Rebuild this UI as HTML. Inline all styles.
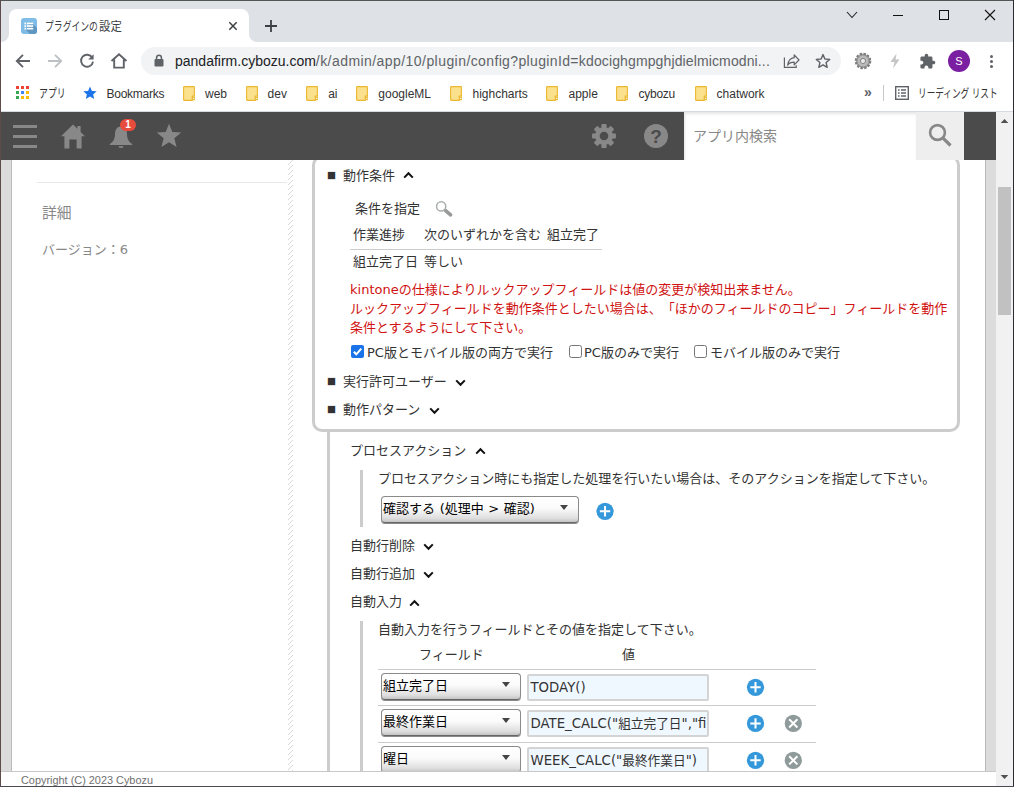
<!DOCTYPE html>
<html lang="ja">
<head>
<meta charset="utf-8">
<title>プラグインの設定</title>
<style>
html,body{margin:0;padding:0;}
body{width:1014px;height:787px;overflow:hidden;position:relative;background:#fff;
  font-family:"Liberation Sans","Noto Sans CJK JP",sans-serif;}
.abs{position:absolute;}
#win{position:absolute;left:0;top:0;width:1014px;height:787px;overflow:hidden;background:#fff;}
/* window frame */
#b-top{left:0;top:0;width:1014px;height:1px;background:#555;z-index:50;}
#b-left{left:0;top:0;width:1px;height:787px;background:#5e4c4c;z-index:50;}
#b-right{left:1013px;top:0;width:1px;height:787px;background:#2a2a30;z-index:50;}
#b-bottom{left:0;top:786px;width:1014px;height:1px;background:#4a4a55;z-index:50;}
/* chrome ui */
#tabstrip{left:1px;top:1px;width:1012px;height:41px;background:#dee1e6;}
#tab{left:9px;top:9px;width:240px;height:33px;background:#fff;border-radius:8px 8px 0 0;}
.foot{position:absolute;bottom:0;width:8px;height:8px;background:#fff;overflow:hidden;}
.foot i{position:absolute;width:16px;height:16px;border-radius:50%;background:#dee1e6;top:-8px;}
.tabtitle{left:45px;top:18px;font-size:12px;line-height:18px;color:#3c4043;white-space:nowrap;
  font-family:"Liberation Sans","Noto Sans CJK JP",sans-serif;transform:scaleX(.81);transform-origin:0 50%;}
#toolbar{left:1px;top:42px;width:1012px;height:38px;background:#fff;}
#omni{left:141px;top:47px;width:700px;height:28px;border-radius:14px;background:#f1f3f4;}
#url{left:175px;top:50px;font-size:14px;line-height:22px;white-space:nowrap;color:#5f6368;
  font-family:"Liberation Sans",sans-serif;letter-spacing:.3px;}
#url b{font-weight:normal;color:#202124;letter-spacing:0;}
#bookbar{left:1px;top:80px;width:1012px;height:31px;background:#fff;}
.bk{position:absolute;top:85px;font-size:12px;line-height:18px;color:#333;white-space:nowrap;
  font-family:"Liberation Sans","Noto Sans CJK JP",sans-serif;}
.fold{position:absolute;top:86px;width:12px;height:15px;}
#bookline{left:1px;top:111px;width:1012px;height:1px;background:#d5dbe0;}
/* page */
#page{left:1px;top:112px;width:995px;height:674px;background:#fff;overflow:hidden;}
#sb{left:996px;top:112px;width:17px;height:674px;background:#f1f1f1;}
#thumb{left:998px;top:187px;width:13px;height:128px;background:#c1c1c1;}
.tri{position:absolute;width:0;height:0;border-left:4px solid transparent;border-right:4px solid transparent;}
#khead{left:0;top:0;width:995px;height:48px;background:#4b4b4b;z-index:10;}
#ksearch{left:683px;top:0;width:232px;height:48px;background:#fff;box-shadow:inset 1px 2px 3px #e6e6e6;}
#ksbtn{left:915px;top:0;width:48px;height:48px;background:#eee;}
#kph{left:692px;top:12px;font-size:14px;line-height:24px;color:#888;white-space:nowrap;}
#lstrip{left:0;top:48px;width:10px;height:611px;background:#dcdcdc;border-right:1px solid #b9b9b9;}
#rstrip{left:984px;top:48px;width:11px;height:611px;background:#dcdcdc;border-left:1px solid #b9b9b9;box-sizing:border-box;}
#footer{left:0;top:659px;width:1012px;height:15px;background:#fff;border-top:1px solid #c8c8c8;z-index:20;}
#copy{left:20px;top:1px;font-size:10.9px;line-height:15px;color:#707070;white-space:nowrap;font-family:"Liberation Sans",sans-serif;}
.t{position:absolute;white-space:nowrap;text-spacing-trim:space-all;font-size:13px;line-height:20px;color:#333;
  font-family:"DejaVu Sans","Liberation Sans","Noto Sans CJK JP",sans-serif;}
.g{color:#888;}
.red{color:#d01212;}
.ln{position:absolute;background:#ccc;}
#panel{left:311px;top:43px;width:648px;height:277px;box-sizing:border-box;border:3px solid #ccc;border-radius:10px;background:#fff;}
.sel{position:absolute;box-sizing:border-box;height:27px;border:1px solid #8a8a8a;border-bottom-color:#666;border-radius:4px;
  background:linear-gradient(#fff 0%,#fbfbfb 45%,#dedede 85%,#c4c4c4 100%);box-shadow:0 1px 0 #8a8a8a;
  font-size:13px;line-height:24px;color:#000;padding-left:1px;white-space:nowrap;overflow:hidden;
  font-family:"DejaVu Sans","Liberation Sans","Noto Sans CJK JP",sans-serif;}
.sel s{position:absolute;right:10px;top:8px;width:0;height:0;border-left:4px solid transparent;border-right:4px solid transparent;border-top:5px solid #444;}
.inp{position:absolute;box-sizing:border-box;height:27px;width:182px;border:2px solid #d4d4d4;border-radius:2px;background:#f0f8ff;
  font-size:12.7px;line-height:23px;color:#333;padding-left:1.5px;white-space:nowrap;overflow:hidden;
  font-family:"DejaVu Sans","Liberation Sans","Noto Sans CJK JP",sans-serif;}
.inp i{font-style:normal;font-size:13.3px;}
</style>
</head>
<body>
<div id="win">
  <div class="abs" id="tabstrip"></div>
  <div class="abs" id="tab">
    <div class="foot" style="left:-8px"><i style="left:-8px"></i></div>
    <div class="foot" style="right:-8px"><i style="left:0"></i></div>
  </div>
  <div class="abs tabtitle" style="transform:scaleX(.735)">プラグインの</div><div class="abs tabtitle" style="left:98.6px;transform:scaleX(.95)">設定</div>
  <div class="abs" id="toolbar"></div>
  <div class="abs" id="omni"></div>
  <div class="abs" id="url"><b>pandafirm.cybozu.com</b><span style="letter-spacing:.44px">/k/admin/app/10/plugin/</span><span style="letter-spacing:.36px">config?pluginId=</span><span style="letter-spacing:.125px">kdocighgmpghjdielmicmodni...</span></div>
  <div class="abs" id="bookbar"></div>
  <div class="abs" id="bookline"></div>


  <!-- tab favicon -->
  <svg class="abs" style="left:21px;top:18px" width="16" height="16" viewBox="0 0 16 16"><rect x="0" y="0" width="16" height="16" rx="3" fill="#7fbde6"/><path d="M10 4 L16 10 V13 a3 3 0 0 1 -3 3 H9 L4 11z" fill="#5f96c2"/><rect x="3.4" y="4.6" width="8.8" height="1.7" fill="#fff"/><rect x="3.4" y="7.2" width="8.8" height="1.7" fill="#fff"/><rect x="3.4" y="9.8" width="8.8" height="1.7" fill="#fff"/><rect x="5.1" y="4.4" width="0.9" height="7.4" fill="#7fbde6"/></svg>
  <!-- tab close -->
  <svg class="abs" style="left:228px;top:21px" width="10" height="10" viewBox="0 0 10 10"><path d="M1.3 1.3 L8.7 8.7 M8.7 1.3 L1.3 8.7" stroke="#3c4043" stroke-width="1.5" fill="none"/></svg>
  <!-- new tab plus -->
  <svg class="abs" style="left:264px;top:19px" width="14" height="14" viewBox="0 0 14 14"><path d="M7 1 V13 M1 7 H13" stroke="#3c4043" stroke-width="1.8" fill="none"/></svg>
  <!-- window controls -->
  <svg class="abs" style="left:846px;top:10px" width="12" height="10" viewBox="0 0 12 10"><path d="M1 2 L6 7.5 L11 2" stroke="#222" stroke-width="1.1" fill="none"/></svg>
  <div class="abs" style="left:893px;top:15px;width:10px;height:1px;background:#111"></div>
  <div class="abs" style="left:939px;top:10px;width:10px;height:10px;box-sizing:border-box;border:1px solid #111"></div>
  <svg class="abs" style="left:984px;top:9px" width="12" height="12" viewBox="0 0 12 12"><path d="M1 1 L11 11 M11 1 L1 11" stroke="#111" stroke-width="1.1" fill="none"/></svg>
  <!-- nav -->
  <svg class="abs" style="left:15px;top:53px" width="16" height="16" viewBox="0 0 16 16"><path d="M15 8 H2.5 M8 1.8 L1.8 8 L8 14.2" stroke="#5f6368" stroke-width="1.9" fill="none"/></svg>
  <svg class="abs" style="left:47px;top:53px" width="16" height="16" viewBox="0 0 16 16"><path d="M1 8 H13.5 M8 1.8 L14.2 8 L8 14.2" stroke="#bdc1c6" stroke-width="1.9" fill="none"/></svg>
  <svg class="abs" style="left:79px;top:53px" width="16" height="16" viewBox="0 0 16 16"><path d="M13.2 4.6 A6 6 0 1 0 14 8.6" stroke="#5f6368" stroke-width="1.9" fill="none"/><path d="M14.6 1.2 V6.6 H9.2z" fill="#5f6368"/></svg>
  <svg class="abs" style="left:110px;top:52px" width="18" height="18" viewBox="0 0 18 18"><path d="M1.5 9 L9 2.2 L16.5 9 M4.2 7.6 V15.6 H13.8 V7.6" stroke="#5f6368" stroke-width="1.9" fill="none" stroke-linejoin="miter"/></svg>
  <!-- lock -->
  <svg class="abs" style="left:154px;top:54px" width="10" height="13" viewBox="0 0 10 13"><rect x="0.5" y="5" width="9" height="7.5" rx="1" fill="#5f6368"/><path d="M2.6 5.5 V3.6 a2.4 2.4 0 0 1 4.8 0 V5.5" stroke="#5f6368" stroke-width="1.5" fill="none"/></svg>
  <!-- share -->
  <svg class="abs" style="left:783px;top:53px" width="18" height="16" viewBox="0 0 18 16"><path d="M1.4 4.6 V14.3 H13.2 V12.3" stroke="#5f6368" stroke-width="1.2" fill="none"/><path d="M11.2 1.9 L16 7 L11.2 11.8 V9.2 C8 9.2 6 10.2 4.7 12.2 C5.2 8 7.6 5.2 11.2 4.7 Z" stroke="#5f6368" stroke-width="1.2" fill="none" stroke-linejoin="round"/></svg>
  <!-- bookmark star -->
  <svg class="abs" style="left:815px;top:53px" width="16" height="16" viewBox="0 0 16 16"><path d="M8 1.6 L9.9 6 L14.7 6.4 L11.1 9.6 L12.2 14.3 L8 11.8 L3.8 14.3 L4.9 9.6 L1.3 6.4 L6.1 6z" stroke="#5f6368" stroke-width="1.4" fill="none" stroke-linejoin="round"/></svg>
  <!-- ext gear -->
  <svg class="abs" style="left:854px;top:52px" width="18" height="18" viewBox="0 0 18 18"><circle cx="9" cy="9" r="7.2" fill="#a8a8a8" stroke="#7d7d7d" stroke-width="2.2" stroke-dasharray="2.4 1.4"/><circle cx="9" cy="9" r="6" fill="#b9b9b9" stroke="#8a8a8a" stroke-width="0.8"/><circle cx="9" cy="9" r="2.6" fill="#e8e8e8" stroke="#7d7d7d" stroke-width="0.9"/></svg>
  <!-- lightning -->
  <svg class="abs" style="left:889px;top:53px" width="12" height="16" viewBox="0 0 12 16"><path d="M7.5 0.5 L1.5 9 H5.5 L4 15.5 L10.5 6.5 H6.5z" fill="#c4c4c4"/></svg>
  <!-- puzzle -->
  <svg class="abs" style="left:918.6px;top:53px" width="17" height="17" viewBox="0 0 24 24"><path d="M20.5 11H19V7c0-1.1-.9-2-2-2h-4V3.5C13 2.12 11.88 1 10.5 1S8 2.12 8 3.5V5H4c-1.1 0-1.99.9-1.99 2v3.8H3.5c1.49 0 2.7 1.21 2.7 2.7s-1.21 2.7-2.7 2.7H2V20c0 1.1.9 2 2 2h3.8v-1.5c0-1.49 1.21-2.7 2.7-2.7 1.49 0 2.7 1.21 2.7 2.7V22H17c1.1 0 2-.9 2-2v-4h1.5c1.38 0 2.5-1.12 2.5-2.5S21.88 11 20.5 11z" fill="#5f6368"/></svg>
  <!-- avatar -->
  <div class="abs" style="left:948px;top:50px;width:22px;height:22px;border-radius:50%;background:#7b1fa2;color:#fff;font:11px/22px 'Liberation Sans',sans-serif;text-align:center">S</div>
  <!-- menu dots -->
  <div class="abs" style="left:990px;top:55px;width:3px;height:3px;border-radius:50%;background:#5f6368;box-shadow:0 5px 0 #5f6368,0 10px 0 #5f6368"></div>
  <!-- bookmarks -->
  <svg class="abs" style="left:16px;top:86px" width="14" height="14" viewBox="0 0 14 14"><rect x="0" y="0" width="3" height="3" fill="#ea4335"/><rect x="5" y="0" width="3" height="3" fill="#ea4335"/><rect x="10" y="0" width="3" height="3" fill="#ea4335"/><rect x="0" y="5" width="3" height="3" fill="#34a853"/><rect x="5" y="5" width="3" height="3" fill="#4285f4"/><rect x="10" y="5" width="3" height="3" fill="#fbbc04"/><rect x="0" y="10" width="3" height="3" fill="#34a853"/><rect x="5" y="10" width="3" height="3" fill="#fbbc04"/><rect x="10" y="10" width="3" height="3" fill="#fbbc04"/></svg>
  <div class="bk" style="left:39px;transform:scaleX(.74);transform-origin:0 50%">アプリ</div>
  <svg class="abs" style="left:83px;top:86px" width="14" height="14" viewBox="0 0 14 14"><path d="M7 0.5 L8.9 4.9 L13.7 5.3 L10.1 8.4 L11.2 13.1 L7 10.6 L2.8 13.1 L3.9 8.4 L0.3 5.3 L5.1 4.9z" fill="#1a73e8"/></svg>
  <div class="bk" style="left:106.5px;letter-spacing:-.25px">Bookmarks</div>
  <svg class="fold" style="left:183px" viewBox="0 0 12 15"><path d="M1.2 0.6 H10.8 a0.6 0.6 0 0 1 0.6 0.6 V10 H9.2 V14.4 H1.2 a0.6 0.6 0 0 1 -0.6 -0.6 V1.2 a0.6 0.6 0 0 1 0.6 -0.6z" fill="#fbe18d" stroke="#ecb730" stroke-width="1.1"/><rect x="9.6" y="10.8" width="1.8" height="3" fill="none" stroke="#ecb730" stroke-width="0.9"/></svg>
  <div class="bk" style="left:205px">web</div>
  <svg class="fold" style="left:245.5px" viewBox="0 0 12 15"><path d="M1.2 0.6 H10.8 a0.6 0.6 0 0 1 0.6 0.6 V10 H9.2 V14.4 H1.2 a0.6 0.6 0 0 1 -0.6 -0.6 V1.2 a0.6 0.6 0 0 1 0.6 -0.6z" fill="#fbe18d" stroke="#ecb730" stroke-width="1.1"/><rect x="9.6" y="10.8" width="1.8" height="3" fill="none" stroke="#ecb730" stroke-width="0.9"/></svg>
  <div class="bk" style="left:267.6px">dev</div>
  <svg class="fold" style="left:306px" viewBox="0 0 12 15"><path d="M1.2 0.6 H10.8 a0.6 0.6 0 0 1 0.6 0.6 V10 H9.2 V14.4 H1.2 a0.6 0.6 0 0 1 -0.6 -0.6 V1.2 a0.6 0.6 0 0 1 0.6 -0.6z" fill="#fbe18d" stroke="#ecb730" stroke-width="1.1"/><rect x="9.6" y="10.8" width="1.8" height="3" fill="none" stroke="#ecb730" stroke-width="0.9"/></svg>
  <div class="bk" style="left:328.2px">ai</div>
  <svg class="fold" style="left:356px" viewBox="0 0 12 15"><path d="M1.2 0.6 H10.8 a0.6 0.6 0 0 1 0.6 0.6 V10 H9.2 V14.4 H1.2 a0.6 0.6 0 0 1 -0.6 -0.6 V1.2 a0.6 0.6 0 0 1 0.6 -0.6z" fill="#fbe18d" stroke="#ecb730" stroke-width="1.1"/><rect x="9.6" y="10.8" width="1.8" height="3" fill="none" stroke="#ecb730" stroke-width="0.9"/></svg>
  <div class="bk" style="left:378.3px">googleML</div>
  <svg class="fold" style="left:450px" viewBox="0 0 12 15"><path d="M1.2 0.6 H10.8 a0.6 0.6 0 0 1 0.6 0.6 V10 H9.2 V14.4 H1.2 a0.6 0.6 0 0 1 -0.6 -0.6 V1.2 a0.6 0.6 0 0 1 0.6 -0.6z" fill="#fbe18d" stroke="#ecb730" stroke-width="1.1"/><rect x="9.6" y="10.8" width="1.8" height="3" fill="none" stroke="#ecb730" stroke-width="0.9"/></svg>
  <div class="bk" style="left:472.5px">highcharts</div>
  <svg class="fold" style="left:546px" viewBox="0 0 12 15"><path d="M1.2 0.6 H10.8 a0.6 0.6 0 0 1 0.6 0.6 V10 H9.2 V14.4 H1.2 a0.6 0.6 0 0 1 -0.6 -0.6 V1.2 a0.6 0.6 0 0 1 0.6 -0.6z" fill="#fbe18d" stroke="#ecb730" stroke-width="1.1"/><rect x="9.6" y="10.8" width="1.8" height="3" fill="none" stroke="#ecb730" stroke-width="0.9"/></svg>
  <div class="bk" style="left:568.5px">apple</div>
  <svg class="fold" style="left:615.7px" viewBox="0 0 12 15"><path d="M1.2 0.6 H10.8 a0.6 0.6 0 0 1 0.6 0.6 V10 H9.2 V14.4 H1.2 a0.6 0.6 0 0 1 -0.6 -0.6 V1.2 a0.6 0.6 0 0 1 0.6 -0.6z" fill="#fbe18d" stroke="#ecb730" stroke-width="1.1"/><rect x="9.6" y="10.8" width="1.8" height="3" fill="none" stroke="#ecb730" stroke-width="0.9"/></svg>
  <div class="bk" style="left:638.5px;letter-spacing:-.25px">cybozu</div>
  <svg class="fold" style="left:694.5px" viewBox="0 0 12 15"><path d="M1.2 0.6 H10.8 a0.6 0.6 0 0 1 0.6 0.6 V10 H9.2 V14.4 H1.2 a0.6 0.6 0 0 1 -0.6 -0.6 V1.2 a0.6 0.6 0 0 1 0.6 -0.6z" fill="#fbe18d" stroke="#ecb730" stroke-width="1.1"/><rect x="9.6" y="10.8" width="1.8" height="3" fill="none" stroke="#ecb730" stroke-width="0.9"/></svg>
  <div class="bk" style="left:716.6px">chatwork</div>
  <div class="bk" style="left:864px;top:83px;font-size:14px;color:#5f6368;font-weight:bold">»</div>
  <div class="abs" style="left:883px;top:85px;width:1px;height:16px;background:#c8c8c8"></div>
  <svg class="abs" style="left:895px;top:86px" width="14" height="14" viewBox="0 0 14 14"><rect x="0.7" y="0.7" width="12.6" height="12.6" fill="none" stroke="#5f6368" stroke-width="1.4"/><path d="M3 4 H4.6 M6 4 H11 M3 7 H4.6 M6 7 H11 M3 10 H4.6 M6 10 H11" stroke="#5f6368" stroke-width="1.4"/></svg>
  <div class="bk" style="left:918px;transform:scaleX(.72);transform-origin:0 50%">リーディング リスト</div>

  <div class="abs" id="page">
    <div class="abs" id="lstrip"></div>
    <div class="abs" id="rstrip"></div>

    <!-- sidebar -->
    <div class="ln" style="left:36px;top:70px;width:250px;height:1px;background:#e8e8e8"></div>
    <div class="t g" style="left:41px;top:89px;font-size:14.8px;line-height:24px">詳細</div>
    <div class="t g" style="left:41px;top:128px">バージョン：6</div>
    <svg class="abs" id="hatch" style="left:287px;top:48px" width="5" height="612"><defs><pattern id="hp" width="5" height="5" patternUnits="userSpaceOnUse"><path d="M4 0h1v1h-1z M3 1h1v1h-1z M2 2h1v1h-1z M1 3h1v1h-1z M0 4h1v1h-1z" fill="#d9d9d9"/></pattern></defs><rect width="5" height="612" fill="url(#hp)"/></svg>
    <!-- below-panel borders -->
    <div class="ln" style="left:326px;top:300px;width:3px;height:360px"></div>
    <div class="ln" style="left:359px;top:358px;width:3px;height:57px"></div>
    <div class="ln" style="left:359px;top:509px;width:3px;height:151px"></div>
    <!-- panel -->
    <div class="abs" id="panel"></div>
    <div class="t" style="left:326px;top:54px"><span style="font-size:9.5px;position:relative;top:-2.5px;margin-right:7px">■</span>動作条件</div>
    <div class="t" style="left:354px;top:87px">条件を指定</div>
    <div class="t" style="left:352px;top:113px">作業進捗</div>
    <div class="t" style="left:423px;top:113px">次のいずれかを含む</div>
    <div class="t" style="left:546px;top:113px">組立完了</div>
    <div class="ln" style="left:349px;top:137px;width:252px;height:1px"></div>
    <div class="t" style="left:352px;top:140px">組立完了日</div>
    <div class="t" style="left:423px;top:140px">等しい</div>
    <div class="t red" style="left:349px;top:168px">kintoneの仕様によりルックアップフィールドは値の変更が検知出来ません。</div>
    <div class="t red" style="left:349px;top:187px">ルックアップフィールドを動作条件としたい場合は、「ほかのフィールドのコピー」フィールドを動作</div>
    <div class="t red" style="left:349px;top:206px">条件とするようにして下さい。</div>
    <div class="t" style="left:366px;top:231px">PC版とモバイル版の両方で実行</div>
    <div class="t" style="left:583px;top:231px">PC版のみで実行</div>
    <div class="t" style="left:709px;top:231px">モバイル版のみで実行</div>
    <div class="t" style="left:326px;top:260px"><span style="font-size:9.5px;position:relative;top:-2.5px;margin-right:7px">■</span>実行許可ユーザー</div>
    <div class="t" style="left:326px;top:288px"><span style="font-size:9.5px;position:relative;top:-2.5px;margin-right:7px">■</span>動作パターン</div>
    <!-- sections -->
    <div class="t" style="left:349px;top:329px">プロセスアクション</div>
    <div class="t" style="left:377px;top:357px">プロセスアクション時にも指定した処理を行いたい場合は、そのアクションを指定して下さい。</div>
    <div class="sel" style="left:380px;top:384px;width:198px;word-spacing:.5px">確認する (処理中 &gt; 確認)<s></s></div>
    <div class="t" style="left:349px;top:424px">自動行削除</div>
    <div class="t" style="left:349px;top:452px">自動行追加</div>
    <div class="t" style="left:349px;top:480px">自動入力</div>
    <div class="t" style="left:377px;top:508px">自動入力を行うフィールドとその値を指定して下さい。</div>
    <div class="t" style="left:418px;top:533px">フィールド</div>
    <div class="t" style="left:621px;top:533px">値</div>
    <div class="ln" style="left:377px;top:557px;width:438px;height:1px"></div>
    <div class="ln" style="left:377px;top:593px;width:438px;height:1px"></div>
    <div class="ln" style="left:377px;top:630px;width:438px;height:1px"></div>
    <div class="sel" style="left:380px;top:561px;width:140px">組立完了日<s></s></div>
    <div class="sel" style="left:380px;top:597px;width:140px">最終作業日<s></s></div>
    <div class="sel" style="left:380px;top:634px;width:140px">曜日<s></s></div>
    <div class="inp" style="left:526px;top:562px"><i>TODAY()</i></div>
    <div class="inp" style="left:526px;top:598px"><i>DATE_CALC("</i>組立完了日<i>","fi</i></div>
    <div class="inp" style="left:526px;top:635px"><i>WEEK_CALC("</i>最終作業日<i>")</i></div>
    <!-- icons -->
    <svg class="abs" style="left:401.5px;top:59px" width="11" height="8" viewBox="0 0 11 8"><path d="M1.2 6.6 L5.5 2.2 L9.8 6.6" stroke="#111" stroke-width="2" fill="none"/></svg>
    <svg class="abs" style="left:453.5px;top:267px" width="11" height="8" viewBox="0 0 11 8"><path d="M1.2 1.4 L5.5 5.8 L9.8 1.4" stroke="#111" stroke-width="2" fill="none"/></svg>
    <svg class="abs" style="left:427.5px;top:295px" width="11" height="8" viewBox="0 0 11 8"><path d="M1.2 1.4 L5.5 5.8 L9.8 1.4" stroke="#111" stroke-width="2" fill="none"/></svg>
    <svg class="abs" style="left:474px;top:335px" width="11" height="8" viewBox="0 0 11 8"><path d="M1.2 6.6 L5.5 2.2 L9.8 6.6" stroke="#111" stroke-width="2" fill="none"/></svg>
    <svg class="abs" style="left:422px;top:431px" width="11" height="8" viewBox="0 0 11 8"><path d="M1.2 1.4 L5.5 5.8 L9.8 1.4" stroke="#111" stroke-width="2" fill="none"/></svg>
    <svg class="abs" style="left:422px;top:459px" width="11" height="8" viewBox="0 0 11 8"><path d="M1.2 1.4 L5.5 5.8 L9.8 1.4" stroke="#111" stroke-width="2" fill="none"/></svg>
    <svg class="abs" style="left:408px;top:487px" width="11" height="8" viewBox="0 0 11 8"><path d="M1.2 6.6 L5.5 2.2 L9.8 6.6" stroke="#111" stroke-width="2" fill="none"/></svg>
    <svg class="abs" style="left:434px;top:88px" width="19" height="18" viewBox="0 0 19 18"><circle cx="6.2" cy="6.4" r="4.6" fill="#fff" stroke="#a9b0ac" stroke-width="1.5"/><path d="M10.6 10.6 L15.6 14.8" stroke="#999" stroke-width="3.6" stroke-linecap="round"/><path d="M9.2 9.2 L11 10.8" stroke="#a5a5a5" stroke-width="1.6"/></svg>
    <svg class="abs" style="left:350px;top:233px" width="13" height="13" viewBox="0 0 13 13"><rect width="13" height="13" rx="2" fill="#1a73e8"/><path d="M2.8 6.8 L5.3 9.3 L10.3 3.7" stroke="#fff" stroke-width="2" fill="none"/></svg>
    <div class="abs" style="left:568px;top:233px;width:13px;height:13px;box-sizing:border-box;border:1px solid #767676;border-radius:2.5px;background:#fff"></div>
    <div class="abs" style="left:693px;top:233px;width:13px;height:13px;box-sizing:border-box;border:1px solid #767676;border-radius:2.5px;background:#fff"></div>





    <svg class="abs" style="left:595px;top:390px" width="20" height="20" viewBox="0 0 20 20"><circle cx="9.05" cy="9.30" r="8.6" fill="#3498db"/><path d="M9.05 4.10 V14.50 M3.85 9.30 H14.25" stroke="#fff" stroke-width="2"/></svg>
    <svg class="abs" style="left:745px;top:566px" width="20" height="20" viewBox="0 0 20 20"><circle cx="9.50" cy="9.30" r="8.6" fill="#3498db"/><path d="M9.50 4.10 V14.50 M4.30 9.30 H14.70" stroke="#fff" stroke-width="2"/></svg>
    <svg class="abs" style="left:745px;top:602px" width="20" height="20" viewBox="0 0 20 20"><circle cx="9.50" cy="9.40" r="8.6" fill="#3498db"/><path d="M9.50 4.20 V14.60 M4.30 9.40 H14.70" stroke="#fff" stroke-width="2"/></svg>
    <svg class="abs" style="left:745px;top:639px" width="20" height="20" viewBox="0 0 20 20"><circle cx="9.50" cy="9.30" r="8.6" fill="#3498db"/><path d="M9.50 4.10 V14.50 M4.30 9.30 H14.70" stroke="#fff" stroke-width="2"/></svg>
    <svg class="abs" style="left:783px;top:602px" width="20" height="20" viewBox="0 0 20 20"><circle cx="9.30" cy="9.40" r="8.6" fill="#8f9a9a"/><path d="M5.20 5.30 L13.40 13.50 M13.40 5.30 L5.20 13.50" stroke="#fff" stroke-width="2"/></svg>
    <svg class="abs" style="left:783px;top:639px" width="20" height="20" viewBox="0 0 20 20"><circle cx="9.30" cy="9.30" r="8.6" fill="#8f9a9a"/><path d="M5.20 5.20 L13.40 13.40 M13.40 5.20 L5.20 13.40" stroke="#fff" stroke-width="2"/></svg>
    <div class="abs" id="khead">

      <!-- hamburger -->
      <div class="abs" style="left:12px;top:13px;width:24px;height:3px;background:#888;box-shadow:0 10px 0 #888,0 20px 0 #888"></div>
      <!-- home -->
      <svg class="abs" style="left:60px;top:12px" width="24" height="25" viewBox="0 0 24 25"><path d="M12 0.5 L0 12.3 H3.4 V24.5 H8.4 V15.5 H15.6 V24.5 H20.6 V12.3 H24 L19.6 8 V2 H16.4 V4.8z" fill="#888"/></svg>
      <!-- bell -->
      <svg class="abs" style="left:108px;top:14px" width="24" height="23" viewBox="0 0 24 23"><path d="M12 0.5 C8 0.5 6 4 6 8 C6 13 4 16 0.8 18 V19 H23.2 V18 C20 16 18 13 18 8 C18 4 16 0.5 12 0.5z" fill="#888"/><path d="M9.3 20.2 H14.7 A2.8 2.6 0 0 1 9.3 20.2z" fill="#888"/></svg>
      <div class="abs" style="left:119px;top:7px;width:16px;height:12px;border-radius:6px;background:#e74c3c;color:#fff;font:bold 10px/12px 'Liberation Sans',sans-serif;text-align:center">1</div>
      <!-- star -->
      <svg class="abs" style="left:155px;top:11px" width="26" height="25" viewBox="0 0 26 25"><path d="M13 0.8 L16.3 9 L25.2 9.6 L18.3 15.3 L20.6 24 L13 19.2 L5.4 24 L7.7 15.3 L0.8 9.6 L9.7 9z" fill="#888"/></svg>
      <!-- gear -->
      <svg class="abs" style="left:590px;top:11px" width="26" height="26" viewBox="-13.5 -13.5 27 27"><g fill="#888"><circle r="9.3"/><g id="gt"><rect x="-2.7" y="-12.4" width="5.4" height="6" rx="0.8"/></g><use href="#gt" transform="rotate(45)"/><use href="#gt" transform="rotate(90)"/><use href="#gt" transform="rotate(135)"/><use href="#gt" transform="rotate(180)"/><use href="#gt" transform="rotate(225)"/><use href="#gt" transform="rotate(270)"/><use href="#gt" transform="rotate(315)"/></g><circle r="4.5" fill="#4b4b4b"/></svg>
      <!-- help -->
      <div class="abs" style="left:643px;top:12px;width:24px;height:24px;border-radius:50%;background:#888;color:#4b4b4b;font:bold 19px/25px 'Liberation Sans',sans-serif;text-align:center">?</div>
      <div class="abs" id="ksearch"></div>
      <div class="abs" id="kph">アプリ内検索</div>
      <div class="abs" id="ksbtn"><svg class="abs" style="left:10px;top:9px" width="28" height="28" viewBox="0 0 28 28"><circle cx="11.5" cy="11.5" r="7.4" fill="none" stroke="#888" stroke-width="2.6"/><path d="M16.8 16.8 L24.5 24.5" stroke="#888" stroke-width="3.2"/></svg></div>
    </div>
    <div class="abs" id="footer"><div class="abs" id="copy">Copyright (C) 2023 Cybozu</div></div>
  </div>
  <div class="abs" id="sb"></div>
  <div class="abs" id="thumb"></div>
  <svg class="abs" style="left:1000px;top:119px" width="9" height="4" viewBox="0 0 9 4"><path d="M0.7 4 L4.5 0 L8.3 4z" fill="#505050"/></svg>
  <svg class="abs" style="left:1000px;top:775px" width="9" height="4" viewBox="0 0 9 4"><path d="M0.7 0 L4.5 4 L8.3 0z" fill="#505050"/></svg>

  <div class="abs" id="b-top"></div><div class="abs" id="b-left"></div><div class="abs" id="b-right"></div><div class="abs" id="b-bottom"></div>
</div>
</body>
</html>
